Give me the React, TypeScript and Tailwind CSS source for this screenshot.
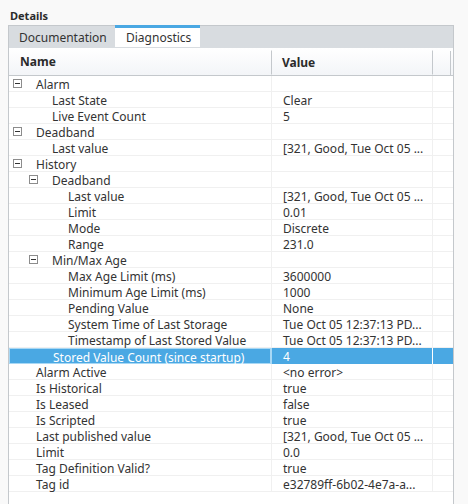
import React from "react";

type Row = {
  level: number;
  name: string;
  value?: string;
  group?: boolean;
  selected?: boolean;
};

const ROWS: Row[] = [
  { level: 0, name: "Alarm", group: true },
  { level: 1, name: "Last State", value: "Clear" },
  { level: 1, name: "Live Event Count", value: "5" },
  { level: 0, name: "Deadband", group: true },
  { level: 1, name: "Last value", value: "[321, Good, Tue Oct 05 ..." },
  { level: 0, name: "History", group: true },
  { level: 1, name: "Deadband", group: true },
  { level: 2, name: "Last value", value: "[321, Good, Tue Oct 05 ..." },
  { level: 2, name: "Limit", value: "0.01" },
  { level: 2, name: "Mode", value: "Discrete" },
  { level: 2, name: "Range", value: "231.0" },
  { level: 1, name: "Min/Max Age", group: true },
  { level: 2, name: "Max Age Limit (ms)", value: "3600000" },
  { level: 2, name: "Minimum Age Limit (ms)", value: "1000" },
  { level: 2, name: "Pending Value", value: "None" },
  { level: 2, name: "System Time of Last Storage", value: "Tue Oct 05 12:37:13 PD..." },
  { level: 2, name: "Timestamp of Last Stored Value", value: "Tue Oct 05 12:37:13 PD..." },
  { level: 1, name: "Stored Value Count (since startup)", value: "4", selected: true },
  { level: 0, name: "Alarm Active", value: "<no error>" },
  { level: 0, name: "Is Historical", value: "true" },
  { level: 0, name: "Is Leased", value: "false" },
  { level: 0, name: "Is Scripted", value: "true" },
  { level: 0, name: "Last published value", value: "[321, Good, Tue Oct 05 ..." },
  { level: 0, name: "Limit", value: "0.0" },
  { level: 0, name: "Tag Definition Valid?", value: "true" },
  { level: 0, name: "Tag id", value: "e32789ff-6b02-4e7a-a..." },
];

const INDENT = [0, 16, 32];

function MinusBox() {
  return (
    <span className="w-[9px] h-[9px] border border-[#8c8c8c] bg-white flex items-center justify-center shrink-0">
      <span className="w-[5px] h-px bg-[#333]" />
    </span>
  );
}

function TreeRow({ row }: { row: Row }) {
  const sel = row.selected;
  return (
    <div className={`flex h-[16px] leading-[15px] ${sel ? "bg-[#4aa8e3] text-white" : "text-[#333]"}`}>
      <div
        className={`w-[262px] flex items-center overflow-x-clip whitespace-nowrap ${
          sel ? "border border-[#a8d8f5]" : "border-b border-[#f0f0f0]"
        }`}
      >
        <div className="flex items-center" style={{ paddingLeft: INDENT[row.level] }}>
          <div className="w-[27px] pl-[4px] flex items-center">{row.group && <MinusBox />}</div>
          <span className="pt-[2px]">{row.name}</span>
        </div>
      </div>
      <div
        className={`w-[162px] pl-[11px] pt-[1px] whitespace-nowrap overflow-x-clip border-l ${
          sel ? "border-l-[#a8d8f5] border-r border-r-white" : "border-[#f0f0f0] border-b border-r"
        }`}
      >
        {row.value ?? ""}
      </div>
      <div className={`flex-1 ${sel ? "" : "border-b border-[#f0f0f0]"}`} />
    </div>
  );
}

export default function App() {
  return (
    <div className="w-[468px] h-[504px] bg-[#f9f9f9] font-['Noto_Sans',sans-serif] text-[12px] overflow-hidden">
      <div className="h-[25px] pl-[10px] pt-[8px] text-[11px] leading-[16px] font-bold text-[#2b2b2b]">
        Details
      </div>
      <div className="ml-[8px] w-[446px] h-[479px] border-x border-t border-[#c4c8cc] bg-white flex flex-col">
        <div className="h-[22px] bg-[#d8dce0] flex items-stretch border-b border-[#d8dce0]">
          <div className="w-[106px] pl-[10px] pt-[2px] flex items-center text-[#333]">Documentation</div>
          <div className="w-[85px] -mt-px bg-white border-t-[3px] border-[#4aa8e3] pl-[11px] pt-px flex items-center text-[#333]">
            Diagnostics
          </div>
        </div>
        <div className="h-[28px] flex bg-gradient-to-b from-white to-[#f3f5f8] border-b border-[#c4c8cc] font-bold text-[#2b2b2b]">
          <div className="w-[262px] pl-[11px] pt-[1px] flex items-center">Name</div>
          <div className="w-[162px] mt-[3px] border-l border-r border-[#c4c8cc] pl-[10px] flex items-center -translate-y-[0.5px]">
            Value
          </div>
          <div className="w-[18px] mt-[3px] border-r border-[#c4c8cc]" />
        </div>
        <div className="flex flex-col">
          {ROWS.map((r, i) => (
            <TreeRow key={i} row={r} />
          ))}
        </div>
      </div>
    </div>
  );
}
